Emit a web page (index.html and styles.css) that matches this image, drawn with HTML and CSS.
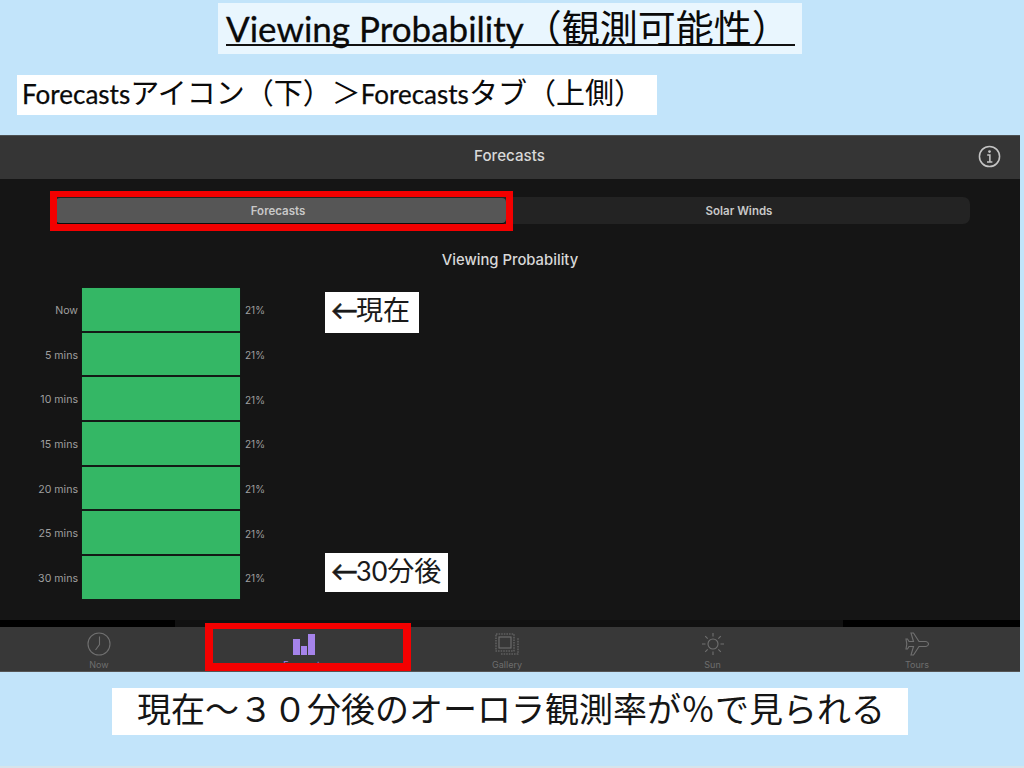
FILE: index.html
```html
<!DOCTYPE html>
<html lang="ja">
<head>
<meta charset="utf-8">
<title>Viewing Probability</title>
<link rel="stylesheet" href="styles.css">
</head>
<body>
<main class="slide">
  <div class="title-row"><h1 class="title"><span class="title-text"><span class="lat">Viewing Probability</span>（観測可能性）</span></h1></div>
  <div class="sub-row"><p class="sub"><span class="lat">Forecasts</span>アイコン（下）＞<span class="lat">Forecasts</span>タブ（上側）</p></div>

  <section class="app">
    <header class="nav">
      <span class="nav-title">Forecasts</span>
      <svg class="info" viewBox="0 0 24 24" aria-hidden="true"><circle cx="12" cy="12" r="10.5"/><path d="M9.6 10.4H12.4V17.6M9.4 17.8H15"/><circle class="dot" cx="12" cy="6.9" r="1.4"/></svg>
    </header>

    <div class="content">
      <div class="segments">
        <div class="seg seg-active">Forecasts</div>
        <div class="seg">Solar Winds</div>
      </div>
      <h2 class="chart-title">Viewing Probability</h2>
      <div class="chart">
        <div class="row"><span class="lab">Now</span><span class="bar"></span><span class="pct">21%</span></div>
        <div class="row"><span class="lab">5 mins</span><span class="bar"></span><span class="pct">21%</span></div>
        <div class="row"><span class="lab">10 mins</span><span class="bar"></span><span class="pct">21%</span></div>
        <div class="row"><span class="lab">15 mins</span><span class="bar"></span><span class="pct">21%</span></div>
        <div class="row"><span class="lab">20 mins</span><span class="bar"></span><span class="pct">21%</span></div>
        <div class="row"><span class="lab">25 mins</span><span class="bar"></span><span class="pct">21%</span></div>
        <div class="row"><span class="lab">30 mins</span><span class="bar"></span><span class="pct">21%</span></div>
      </div>
      <div class="edge"><span class="edge-black"></span><span class="edge-black"></span></div>
    </div>

    <nav class="tabs">
      <div class="tab">
        <svg class="ico" viewBox="0 0 24 24" aria-hidden="true"><circle cx="12" cy="12" r="11"/><path d="M12.5 4.5V12.5L8.5 18"/></svg>
        <span>Now</span>
      </div>
      <div class="tab tab-on">
        <svg class="ico" viewBox="0 0 24 24" aria-hidden="true"><rect x="1" y="7" width="7" height="16"/><rect x="9" y="14" width="6" height="9"/><rect x="16" y="2" width="7" height="21"/></svg>
        <span>Forecasts</span>
      </div>
      <div class="tab">
        <svg class="ico" viewBox="0 0 24 24" aria-hidden="true"><path stroke-dasharray="1.6 1" d="M1 2H19V19H1Z"/><path stroke-dasharray="1.6 1" d="M6 22H23V6"/><rect x="4" y="5" width="12" height="11"/></svg>
        <span>Gallery</span>
      </div>
      <div class="tab">
        <svg class="ico" viewBox="0 0 24 24" aria-hidden="true"><circle cx="12" cy="12" r="5"/><path d="M12 1V4.5M12 19.5V23M1 12H4.5M19.5 12H23M4.2 4.2L6.7 6.7M17.3 17.3L19.8 19.8M4.2 19.8L6.7 17.3M17.3 6.7L19.8 4.2"/></svg>
        <span>Sun</span>
      </div>
      <div class="tab">
        <svg class="ico" viewBox="0 0 24 24" aria-hidden="true"><path d="M6 1H8.5L14 9.5H20.5C22 9.5 23.5 10.8 23.5 12S22 14.5 20.5 14.5H14L8.5 23H6L8.5 14.5H4L2.5 17H1L1.8 12L1 7H2.5L4 9.5H8.5Z"/></svg>
        <span>Tours</span>
      </div>
    </nav>

    <div class="note note-now"><span class="arrow">←</span>現在</div>
    <div class="note note-30"><span class="arrow">←</span>30分後</div>
    <div class="red red-seg"></div>
    <div class="red red-tab"></div>
  </section>

  <div class="foot-row"><p class="foot">現在～３０分後のオーロラ観測率が％で見られる</p></div>
</main>
</body>
</html>
```

FILE: styles.css
```css
* { box-sizing: border-box; }
html, body { margin: 0; padding: 0; }
body { width: 1024px; height: 768px; overflow: hidden; font-family: "Lato", "Noto Sans CJK JP", sans-serif; }

.slide {
  width: 1024px; height: 768px;
  background: #c2e4fa;
  border-bottom: 2px solid #d6e4ec;
  display: flex; flex-direction: column;
}

.title-row { padding: 3px 0 0 218px; height: 75px; }
.title {
  margin: 0; width: 584px; height: 51px;
  padding: 5px 0 0 8px;
  background: #e9f6fe;
  font-size: 38px; line-height: 38px; font-weight: 400; color: #0a0a0a;
  white-space: nowrap; overflow: hidden;
}
.title-text {
  display: block; width: 569px; height: 38px;
  border-bottom: 2px solid #111;
}
.title .lat { font-size: 35px; -webkit-text-stroke: 0.3px #0a0a0a; }

.sub-row { padding-left: 17px; height: 60px; }
.sub {
  margin: 0; width: 640px; height: 40px;
  padding-left: 5px;
  background: #fff;
  font-size: 29px; line-height: 36px; color: #0a0a0a;
  white-space: nowrap;
}
.sub .lat { font-size: 26px; -webkit-text-stroke: 0.25px #0a0a0a; }

.app {
  position: relative;
  width: 1020px; height: 537px;
  background: #151515;
  display: flex; flex-direction: column;
  color: #ddd;
  font-family: "Inter", "Noto Sans CJK JP", sans-serif;
}

.nav {
  position: relative;
  height: 44px; flex: none;
  background: #353535;
  border-top: 1px solid #4c5052;
  display: flex; align-items: center; justify-content: center;
  padding-bottom: 4px;
}
.nav-title { font-size: 15.2px; font-weight: 500; color: #d8d8d8; margin-left: -1px; }
.info {
  position: absolute; right: 19px; top: 9px;
  width: 23px; height: 23px;
  fill: none; stroke: #c4c4c4; stroke-width: 1.6;
}
.info .dot { fill: #c4c4c4; stroke: none; }

.content { flex: 1; display: flex; flex-direction: column; min-height: 0; padding-top: 18px; position: relative; }

.segments {
  margin-left: 50px; width: 920px; height: 27px;
  background: #232323; border-radius: 7px;
  display: flex; flex: none;
  padding: 1px 0 1px 6px;
}
.seg {
  flex: none; width: 466px;
  font-size: 11.5px; font-weight: 600; color: #c8c8c8;
  display: flex; align-items: center; justify-content: center;
}
.seg-active {
  width: 450px; height: 25px;
  padding-right: 6px;
  background: #565656; border-radius: 4px;
  box-shadow: 0 1px 1px #0a0a0a;
}

.chart-title {
  margin: 27px 0 0; height: 18px;
  text-align: center;
  font-size: 14.8px; line-height: 18px; font-weight: 500; color: #d8d8d8;
}

.chart { margin-top: 19px; display: flex; flex-direction: column; gap: 2px; }
.row { display: flex; align-items: center; height: 42.7px; }
.lab { width: 78px; text-align: right; font-size: 10.6px; color: #9f9f9f; padding-top: 2px; }
.bar { width: 158px; height: 100%; margin: 0 5px 0 4px; background: #34b765; box-shadow: 0 0 1px #0c3a1e; }
.pct { font-size: 10px; color: #9f9f9f; padding-top: 2px; }

.edge { margin-top: auto; height: 7px; display: flex; justify-content: space-between; background: #111; }
.edge-black { width: 175px; background: #000; }
.edge-black + .edge-black { width: 177px; }

.tabs {
  height: 45px; flex: none;
  background: #383838;
  border-bottom: 1px solid #555;
  display: grid; grid-template-columns: 198px 212px 194px 217px 192px;
}
.tab {
  display: flex; flex-direction: column; align-items: center;
  padding-top: 5px;
  font-size: 9px; line-height: 11px; color: #6e6e6e;
}
.ico { width: 24px; height: 24px; margin-bottom: 3px; fill: none; stroke: #707070; stroke-width: 1.1; }
.tab-on { color: #a583ea; }
.tab-on .ico { fill: #a583ea; stroke: none; }

.note {
  position: absolute;
  background: #fff; color: #1a1a1a;
  line-height: 36px;
  font-size: 27px; padding-left: 6px;
  font-family: "Lato", "Noto Sans CJK JP", sans-serif;
  white-space: nowrap;
}
.arrow { display: inline-block; margin-right: -2px; -webkit-text-stroke: 0.6px #1a1a1a; }
.note-now { left: 325px; top: 157px; width: 94px; height: 41px; }
.note-30 { left: 325px; top: 418px; width: 123px; height: 39px; }

.red { position: absolute; border-style: solid; border-color: #f40000; }
.red-seg { left: 50px; top: 56px; width: 463px; height: 40px; border-width: 6px 7px 7px 7px; }
.red-tab { left: 205px; top: 488px; width: 206px; height: 48px; border-width: 6px 8px 8px 8px; }

.foot-row { padding: 16px 0 0 112px; }
.foot {
  margin: 0; width: 796px; height: 47px;
  padding-left: 25px;
  background: #fff;
  font-size: 34px; line-height: 41px; color: #151515;
  white-space: nowrap;
}
```
